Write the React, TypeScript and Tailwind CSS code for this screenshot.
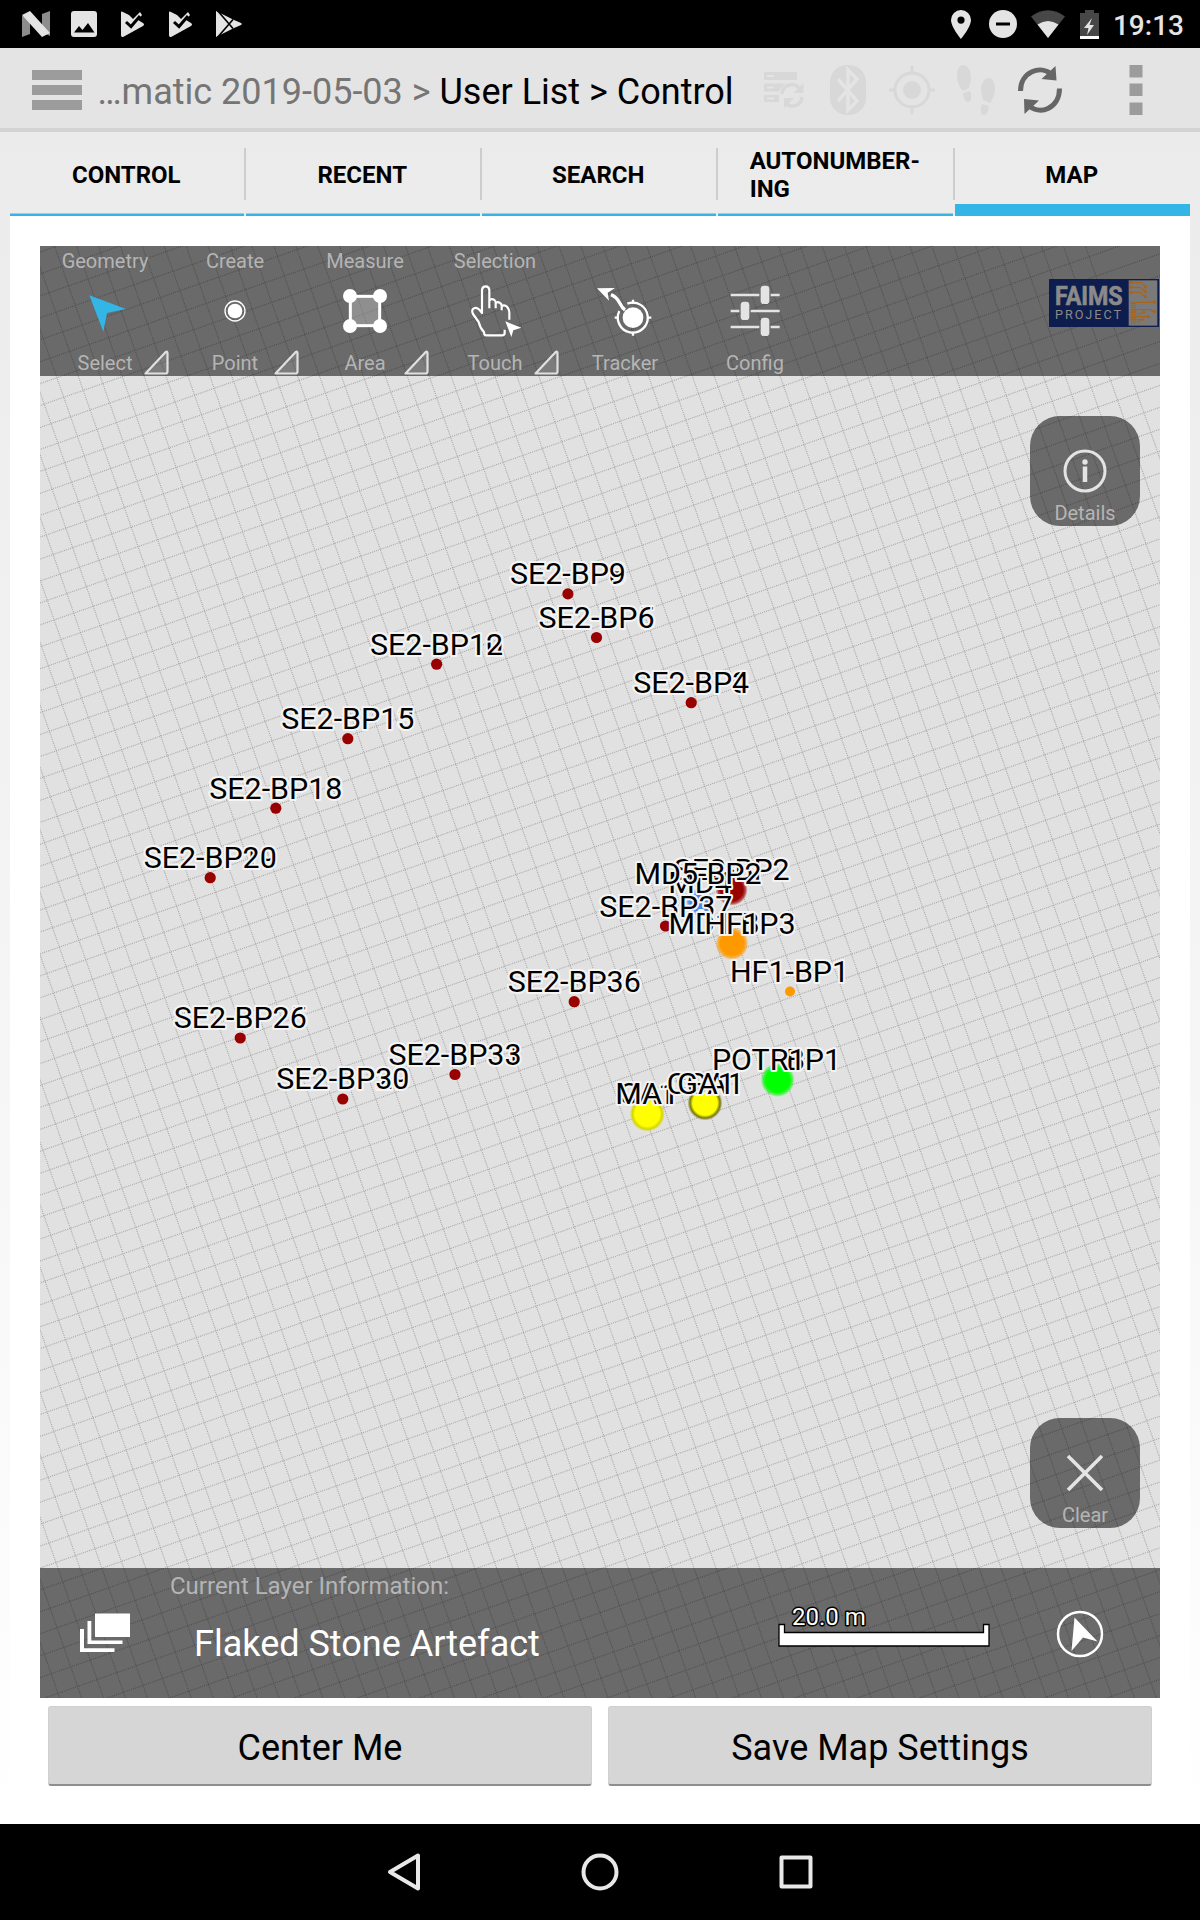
import React from "react";

type Dot = { x: number; y: number; r: number; c: string; edge?: string };
type Label = { x: number; y: number; t: string };

/* Map coordinates share the screen's pixel grid; the canvas view box starts at 40,246. */
const stations: [number, number, string[]][] = [
  [567.9, 593.9, ["SE2-BP8", "SE2-BP9"]],
  [596.5, 637.5, ["SE2-BP5", "SE2-BP6"]],
  [436.6, 664.2, ["SE2-BP10", "SE2-BP12"]],
  [691.2, 702.7, ["SE2-BP3", "SE2-BP4"]],
  [347.8, 738.7, ["SE2-BP13", "SE2-BP15"]],
  [275.8, 808.2, ["SE2-BP16", "SE2-BP18"]],
  [210.2, 877.7, ["SE2-BP19", "SE2-BP20"]],
  [574.2, 1001.7, ["SE2-BP35", "SE2-BP36"]],
  [240.2, 1038, ["SE2-BP25", "SE2-BP26"]],
  [455, 1074.5, ["SE2-BP31", "SE2-BP33"]],
  [342.8, 1099, ["SE2-BP29", "SE2-BP30"]],
  [665.5, 926, ["SE2-BP37"]],
];

const clusters: Dot[] = [
  { x: 731.7, y: 889.7, r: 16, c: "#990000" },
  { x: 700, y: 902, r: 14, c: "#4488ee" },
  { x: 732, y: 943.5, r: 16.5, c: "#ff9900" },
  { x: 777.7, y: 1080, r: 17, c: "#00ff00" },
  { x: 647.3, y: 1114, r: 17.5, c: "#ffff00", edge: "#d6d600" },
  { x: 705, y: 1103, r: 17.5, c: "#ffff00", edge: "#77770a" },
];

const clusterLabels: Label[] = [
  { x: 731.7, y: 879.5, t: "SE1-BP2" },
  { x: 731.7, y: 879.5, t: "SE2-BP2" },
  { x: 700, y: 892.7, t: "MD4" },
  { x: 698, y: 884, t: "MD5-BP2" },
  { x: 665.8, y: 916.7, t: "SE2-BP37" },
  { x: 732, y: 934.3, t: "MD1-BP3" },
  { x: 732, y: 934.3, t: "HF1" },
  { x: 789.5, y: 982.3, t: "HF1-BP1" },
  { x: 813.5, y: 1070, t: "BP1" },
  { x: 758.7, y: 1070, t: "POTR1" },
  { x: 647.2, y: 1104.3, t: "CA1" },
  { x: 647.2, y: 1104.3, t: "MA1" },
  { x: 705.5, y: 1093.5, t: "CGA1" },
  { x: 706, y: 1093.5, t: "GA1" },
];

function MapLabel({ x, y, t }: Label) {
  return (
    <text x={x} y={y} textAnchor="middle" fontSize="30.4" fill="#000" stroke="#f4f4f4" strokeWidth="4" strokeLinejoin="round" paintOrder="stroke">
      {t}
    </text>
  );
}

function MapCanvas() {
  const step = 20.695;
  const lines = Array.from({ length: 121 }, (_, i) => (i - 60) * step);
  return (
    <svg className="absolute inset-0 h-full w-full" viewBox="40 246 1120 1452" fontFamily="Roboto, sans-serif">
      <defs>
        {clusters.map((d, i) => (
          <radialGradient key={i} id={`dot${i}`}>
            <stop offset="0.7" stopColor={d.c} />
            <stop offset="0.86" stopColor={d.edge ?? d.c} stopOpacity={d.edge ? 1 : 0.65} />
            <stop offset="1" stopColor={d.edge ?? d.c} stopOpacity="0" />
          </radialGradient>
        ))}
      </defs>
      {/* Two families of dotted lines, the survey grid rotated against north. */}
      <g stroke="#a2a2a2" strokeWidth="1.100" strokeDasharray="0.900 1.100">
        <g transform="translate(57.9 1068) rotate(-19.34)">
          {lines.map((v) => <path key={v} d={`M${v} -1200V1200`} />)}
        </g>
        <g transform="translate(40 1085.5) rotate(-19.34)">
          {lines.map((v) => <path key={v} d={`M-1000 ${v}H1500`} />)}
        </g>
      </g>
      {stations.map(([x, y]) => <circle key={`${x}`} cx={x} cy={y} r="5.6" fill="#990000" />)}
      <circle cx="790" cy="991.5" r="5" fill="#ff9900" />
      {clusters.map((d, i) => <circle key={i} cx={d.x} cy={d.y} r={d.r} fill={`url(#dot${i})`} />)}
      {stations.slice(0, 11).map(([x, y, names]) => names.map((n) => <MapLabel key={n} x={x} y={y - 9.7} t={n} />))}
      {clusterLabels.map((l, i) => <MapLabel key={i} {...l} />)}
    </svg>
  );
}

function PlayCheck() {
  return (
    <svg className="h-[26px] w-[25px]" viewBox="0 0 25 26">
      <path d="M1 1.500Q1 0 3 1l6 3 4 4 7-7 2 3-4 5 5 3q2 1.500 0 3L4 25.500Q1 27 1 24z" fill="#e4e4e4" />
      <path d="M6 11l5 4.500L20 5" fill="none" stroke="#000" strokeWidth="3" />
    </svg>
  );
}

function StatusBar() {
  return (
    <div className="flex h-12 items-center justify-between bg-black pl-[22px] pr-[16px]">
      <div className="flex items-center">
        <svg className="h-[26px] w-[28px]" viewBox="0 0 28 26">
          <path d="M0 5v21l8-3V6zM20 3l8-3v25l-8-4z" fill="#8d8d8d" />
          <path d="M0 4L8 0 28 22 20 26z" fill="#e4e4e4" />
        </svg>
        <svg className="ml-[21px] h-[26px] w-[26px]" viewBox="0 0 26 26">
          <rect width="26" height="26" rx="3" fill="#e4e4e4" />
          <path d="M3 21.500l5-6.500 3.500 4L17 12l6.500 9.500z" fill="#000" />
        </svg>
        <div className="ml-[23px]"><PlayCheck /></div>
        <div className="ml-[23px]"><PlayCheck /></div>
        <svg className="ml-[23px] h-[30px] w-[26px]" viewBox="0 0 26 28">
          <path d="M0 1L17 9.500 25 13q1.500 1 0 2L17 18.500 0 27z" fill="#e4e4e4" />
          <path d="M1 0L17 18.500M1 28L17 9.500" stroke="#000" strokeWidth="1.700" />
        </svg>
      </div>
      <div className="flex items-center">
        <svg className="h-[29px] w-[20px]" viewBox="0 0 20 29">
          <path fillRule="evenodd" d="M10 0a10 10 0 0 1 10 10c0 7-10 19-10 19S0 17 0 10A10 10 0 0 1 10 0zm0 6.500a3.600 3.600 0 1 0 0 7.200 3.600 3.600 0 0 0 0-7.200z" fill="#e4e4e4" />
        </svg>
        <svg className="ml-[18px] h-[28px] w-[28px]" viewBox="0 0 28 28">
          <circle cx="14" cy="14" r="14" fill="#e4e4e4" />
          <path d="M7 14h14" stroke="#000" strokeWidth="3" />
        </svg>
        <svg className="ml-[14px] h-[28px] w-[34px]" viewBox="0 0 34 28">
          <path d="M0 6.500Q17-6 34 6.500L17 28z" fill="#474747" />
          <path d="M6.500 14.500Q17 7.500 27.500 14.500L17 28z" fill="#e4e4e4" />
        </svg>
        <svg className="ml-[15px] h-[29px] w-[19px]" viewBox="0 0 19 29">
          <path d="M0 3h5V0h9v3h5v26H0z" fill="#474747" />
          <path d="M0 26h19v3H0z" fill="#fff" />
          <path d="M12 8L4 18h4.500L7 25l7-10H9.500z" fill="#e4e4e4" />
        </svg>
        <span className="ml-[14px] pt-[3px] text-[28px] font-medium leading-8 text-[#e4e4e4]">19:13</span>
      </div>
    </div>
  );
}

function ActionBar() {
  return (
    <header className="flex h-[84px] items-center border-b-4 border-[#d3d3d3] bg-[#e4e4e4]">
      <div className="ml-8 mt-1 flex w-[50px] flex-col gap-[5px]">
        <i className="h-[10px] bg-[#9c9c9c]" />
        <i className="h-[10px] bg-[#9c9c9c]" />
        <i className="h-[10px] bg-[#9c9c9c]" />
      </div>
      <h1 className="ml-[15.500px] w-[650px] whitespace-pre pt-[7px] text-[36px] leading-[42px] text-black">
        <span className="text-[#757575]">…matic 2019-05-03 &gt; </span>User List &gt; Control
      </h1>
      {/* Four inactive indicators, then refresh and overflow */}
      <svg className="ml-[12.500px] mt-1 h-[60px] w-[392px]" viewBox="760 60 392 60">
        <g fill="#d8d8d8">
          <path fillRule="evenodd" d="M764 72h33v8h-33zM767 75v2h7v-2zM764 83.500h28l-7 8h-21zM767 86.500v2h7v-2zM764 95h15v7h-15zM767 97.500v2h7v-2z" />
          <rect x="830" y="65" width="36" height="50" rx="17" />
          <ellipse cx="912" cy="90" rx="9" ry="9" />
          <path d="M910.500 66h3v9h-3zM910.500 105h3v9h-3zM889 88.500h7v3h-7zM928 88.500h7v3h-7z" />
          <path d="M963 65c5 0 8 6 8 13 0 4-2 8-2 10l-6 3c-3-3-6-9-6-15s2-11 6-11zM963 93l7-2c2 5 2 11-2 11-3 0-4-3-5-9zM989 78c4 0 6 5 6 11s-3 11-5 14l-7-3c0-3-2-6-2-10 0-7 3-12 8-12zM982 104l7 2c-1 5-2 9-5 9-4 0-4-6-2-11z" />
        </g>
        <circle cx="792" cy="95" r="13" fill="#e4e4e4" />
        <g fill="none" stroke="#d8d8d8" strokeWidth="3.500">
          <path d="M782 94c1-10 12-12 17-6" />
          <path d="M802 97c-1 10-12 11-17 6" />
        </g>
        <path d="M803.500 83v10h-10zM784 108V98h10z" fill="#d8d8d8" />
        <path d="M838 79l19 22-9 9V70l9 9-19 22" fill="none" stroke="#e4e4e4" strokeWidth="3.500" />
        <circle cx="912" cy="90" r="17" fill="none" stroke="#d8d8d8" strokeWidth="3" />
        <g fill="none" stroke="#666" strokeWidth="5">
          <path d="M1020.500 91c0-19 20-27 32-16" />
          <path d="M1059.500 88.500c0 20-20 28-32 16" />
        </g>
        <path d="M1055.500 66l1 14.500-15-1.500zM1024.500 114l-.5-15 15 1.500z" fill="#666" />
        <path d="M1129.500 65h13v12.500h-13zM1129.500 83.500h13v12.500h-13zM1129.500 102.500h13v12.500h-13z" fill="#9c9c9c" />
      </svg>
    </header>
  );
}

function Tabs() {
  const tabs = ["CONTROL", "RECENT", "SEARCH", "AUTONUMBER-\nING", "MAP"];
  return (
    <nav className="mx-[10px] grid h-[84px] grid-cols-[234px_234px_234px_235px_235px] gap-[2px]">
      {tabs.map((t, i) => (
        <div
          key={t}
          className={`relative flex items-center justify-center whitespace-pre pr-[1.500px] pt-[2px] text-[24px] font-bold leading-7 text-black ${
            i === 4 ? "shadow-[inset_0_-12px_0_#33b5e5]" : "shadow-[inset_0_-2.5px_0_#33b5e5]"
          }`}
        >
          {t}
          {i < 4 && <i className="absolute -right-[2px] top-4 h-[52px] w-[2px] bg-[#cdcdcd]" />}
        </div>
      ))}
    </nav>
  );
}

function Tool({ top, bottom, box, corner, children }: { top?: string; bottom: string; box: string; corner?: boolean; children: React.ReactNode }) {
  return (
    <div className="relative flex h-full w-[130px] flex-col items-center pt-[3px] text-[20px] leading-6 text-[#b5b5b5]">
      <span className="h-6">{top}</span>
      <svg className="h-[78px] w-[130px]" viewBox={box}>{children}</svg>
      <span>{bottom}</span>
      {corner && (
        <svg className="absolute bottom-0 right-0 h-[27px] w-[27px]" viewBox="0 0 27 27">
          <path d="M2.500 24.500L22.500 3.200q2-1.500 2 1v18.300q0 2-2 2z" fill="#fff" fillOpacity="0.12" stroke="#e0e0e0" strokeWidth="2.200" strokeLinejoin="round" />
        </svg>
      )}
    </div>
  );
}

function Logo() {
  return (
    <svg className="ml-auto mr-[1px] mt-[33px] h-[48px] w-[110px]" viewBox="0 0 330 144">
      <rect width="330" height="144" fill="#0d1d4e" />
      <rect x="239" y="4" width="86" height="136" fill="#7a7a7a" />
      <g fill="#8a8a8a" fontFamily="Roboto, sans-serif">
        <text x="18" y="78" fontSize="80" fontWeight="700" stroke="#8a8a8a" strokeWidth="2" textLength="203" lengthAdjust="spacingAndGlyphs">FAIMS</text>
        <text x="18" y="119" fontSize="38" textLength="198">PROJECT</text>
      </g>
      <g stroke="#a8641c" strokeWidth="3.500" fill="none">
        <path d="M246 11h30l13 12M246 25h26l16 12M246 40h28l14 13M260 70h56M246 92h60l10 7M246 113h52M246 122h36" />
        <path d="M253 70v18M253 90v44" strokeWidth="15" strokeDasharray="5 2" />
        <path d="M264 104h12l8-6M264 128h10" />
      </g>
      <g fill="#a8641c">
        <circle cx="246" cy="11" r="5" /><circle cx="246" cy="25" r="5" /><circle cx="246" cy="40" r="5" />
        <circle cx="290" cy="24" r="5" /><circle cx="289" cy="37" r="5" /><circle cx="289" cy="53" r="5" />
        <circle cx="316" cy="69" r="5" /><circle cx="316" cy="98" r="5" /><circle cx="298" cy="113" r="5" />
        <circle cx="281" cy="122" r="4" /><circle cx="285" cy="100" r="4" />
      </g>
    </svg>
  );
}

function Toolbar() {
  return (
    <div className="flex h-[130px] items-start bg-black/53">
      <Tool top="Geometry" bottom="Select" box="30 114 390 234" corner>
        <path d="M178 181L288 222 231 234 220 290z" fill="#33b5e5" />
      </Tool>
      <Tool top="Create" bottom="Point" box="420 114 390 234" corner>
        <circle cx="615" cy="228" r="22" fill="#fff" />
        <circle cx="615" cy="228" r="30" fill="none" stroke="#fff" strokeWidth="4" />
      </Tool>
      <Tool top="Measure" bottom="Area" box="810 114 390 234" corner>
        <rect x="961" y="184" width="88" height="88" fill="#fff" fillOpacity="0.25" stroke="#fff" strokeWidth="9" />
        <g fill="#fff">
          <circle cx="960" cy="183" r="21" /><circle cx="1050" cy="183" r="21" />
          <circle cx="960" cy="273" r="21" /><circle cx="1050" cy="273" r="21" />
        </g>
      </Tool>
      <Tool top="Selection" bottom="Touch" box="30 114 390 234" corner>
        <path
          d="M254 284v9q0 8-8 8h-48q-6 0-6-10-12-12-16-30l-17-24q-4-8-1-14 9-10 21 2l7 9v-69q1-11 11-11t11 11v55m0-22q4-9 14-4 5 3 5 9v17m0-15q5-6 13-1 5 3 5 8v14m0-13q9-5 16 2 7 8 7 17v22"
          fill="none" stroke="#fff" strokeWidth="6.500" strokeLinejoin="round"
        />
        <path d="M256 259l48 19-24 8-6 20z" fill="#fff" />
      </Tool>
      <Tool bottom="Tracker" box="420 114 390 234">
        <circle cx="639" cy="248" r="31" fill="#fff" />
        <path d="M622 206a45 45 0 1 1-24 22" fill="none" stroke="#fff" strokeWidth="7" />
        <path d="M639 194v12M639 290v12M584 248h12M682 248h12" stroke="#fff" strokeWidth="7" />
        <path d="M615 225c-18-12-14-36-42-46" fill="none" stroke="#fff" strokeWidth="10" />
        <path d="M531 160l54-1-22 14 4 24z" fill="#fff" />
      </Tool>
      <Tool bottom="Config" box="810 114 390 234">
        <path d="M932 180h86M1052 180h27M932 228h26M992 228h87M932 276h86M1052 276h27" stroke="#e4e4e4" strokeWidth="7.500" />
        <g fill="#e4e4e4">
          <rect x="1022" y="152" width="26" height="55" rx="10" />
          <rect x="962" y="200" width="26" height="55" rx="10" />
          <rect x="1022" y="248" width="26" height="55" rx="10" />
        </g>
      </Tool>
      <Logo />
    </div>
  );
}

function RoundButton({ label, children }: { label: string; children: React.ReactNode }) {
  return (
    <button className="flex h-[110px] w-[110px] flex-col items-center justify-end rounded-[30px] bg-black/53 text-[20px] leading-6 text-[#b5b5b5]">
      <svg className="h-[62px] w-[62px]" viewBox="-31 -32 62 62">{children}</svg>
      <span className="mb-[1px]">{label}</span>
    </button>
  );
}

function LayerBar() {
  return (
    <div className="flex h-[130px] bg-black/53">
      <svg className="ml-10 mt-[45px] h-[39px] w-[50px]" viewBox="0 0 50 39" fill="#fff">
        <path d="M15 0.500h35v23.500H15zM7.500 8h3.800v19.500H42.500v3.500H7.500zM0 16h4v19.300h30.500V39H0z" />
      </svg>
      <div className="ml-10 w-[480px]">
        <div className="mt-1 text-[24px] leading-7 text-[#b5b5b5]">Current Layer Information:</div>
        <div className="ml-[24px] mt-[23px] text-[36px] leading-[42px] text-white">Flaked Stone Artefact</div>
      </div>
      <svg className="ml-[124px] mt-[28px] h-[54px] w-[220px]" viewBox="774 1596 220 54">
        <path d="M779 1624.500h5.500v8h199v-8h5.500v21.500h-210z" fill="#fff" stroke="#000" strokeWidth="1.300" />
        <text x="792" y="1625" fontFamily="Roboto, sans-serif" fontSize="24" fill="#fff" stroke="#000" strokeWidth="3" strokeLinejoin="round" paintOrder="stroke">20.0 m</text>
      </svg>
      <svg className="ml-[62px] mt-[42px] h-[48px] w-[48px]" viewBox="1056 1610 48 48">
        <circle cx="1080" cy="1634" r="22" fill="none" stroke="#fff" strokeWidth="2.500" />
        <path d="M1074.500 1617.500l23 24-14.500-4-11.500 13.500z" fill="#fff" />
      </svg>
    </div>
  );
}

function MapButton({ children }: { children: string }) {
  return (
    <button className="h-20 flex-1 rounded-[3px] border border-b-2 border-[#cfcfcf] border-b-[#8f8f8f] bg-[#d6d6d6] pt-[4px] text-[36px] leading-[42px] text-black">
      {children}
    </button>
  );
}

export default function App() {
  return (
    <div className="flex h-[1920px] w-[1200px] flex-col overflow-hidden bg-white font-['Roboto',sans-serif]">
      <StatusBar />
      <ActionBar />
      <div className="flex h-[1692px] flex-col bg-linear-to-b from-[#ebebeb] to-white">
        <Tabs />
        <main className="mx-[10px] flex-1 bg-white px-[30px] pt-[30px]">
          <section className="relative h-[1452px] bg-[#e1e1e1]">
            <MapCanvas />
            <div className="relative flex h-full flex-col">
              <Toolbar />
              <div className="flex flex-1 flex-col items-end justify-between pb-10 pr-5 pt-10">
                <RoundButton label="Details">
                  <circle r="20" fill="none" stroke="#e4e4e4" strokeWidth="3" />
                  <path d="M0-4.500v15.500" stroke="#e4e4e4" strokeWidth="4.500" />
                  <circle cy="-9" r="2.700" fill="#e4e4e4" />
                </RoundButton>
                <RoundButton label="Clear">
                  <path d="M-17-17l34 34M17-17l-34 34" stroke="#e4e4e4" strokeWidth="3.600" />
                </RoundButton>
              </div>
              <LayerBar />
            </div>
          </section>
          <div className="mx-2 mt-2 flex gap-4">
            <MapButton>Center Me</MapButton>
            <MapButton>Save Map Settings</MapButton>
          </div>
        </main>
      </div>
      <footer className="flex h-24 items-center justify-center gap-[156px] bg-black">
        <svg className="h-10 w-10" viewBox="0 0 40 40" fill="none" stroke="#e8e8e8" strokeWidth="4" strokeLinejoin="round">
          <path d="M6 20L34 3.500V36.500z" />
        </svg>
        <svg className="h-10 w-10" viewBox="0 0 40 40" fill="none" stroke="#e8e8e8" strokeWidth="4">
          <circle cx="20" cy="20" r="16.500" />
        </svg>
        <svg className="h-10 w-10" viewBox="0 0 40 40" fill="none" stroke="#e8e8e8" strokeWidth="4" strokeLinejoin="round">
          <rect x="5.500" y="5.500" width="29" height="29" />
        </svg>
      </footer>
    </div>
  );
}
